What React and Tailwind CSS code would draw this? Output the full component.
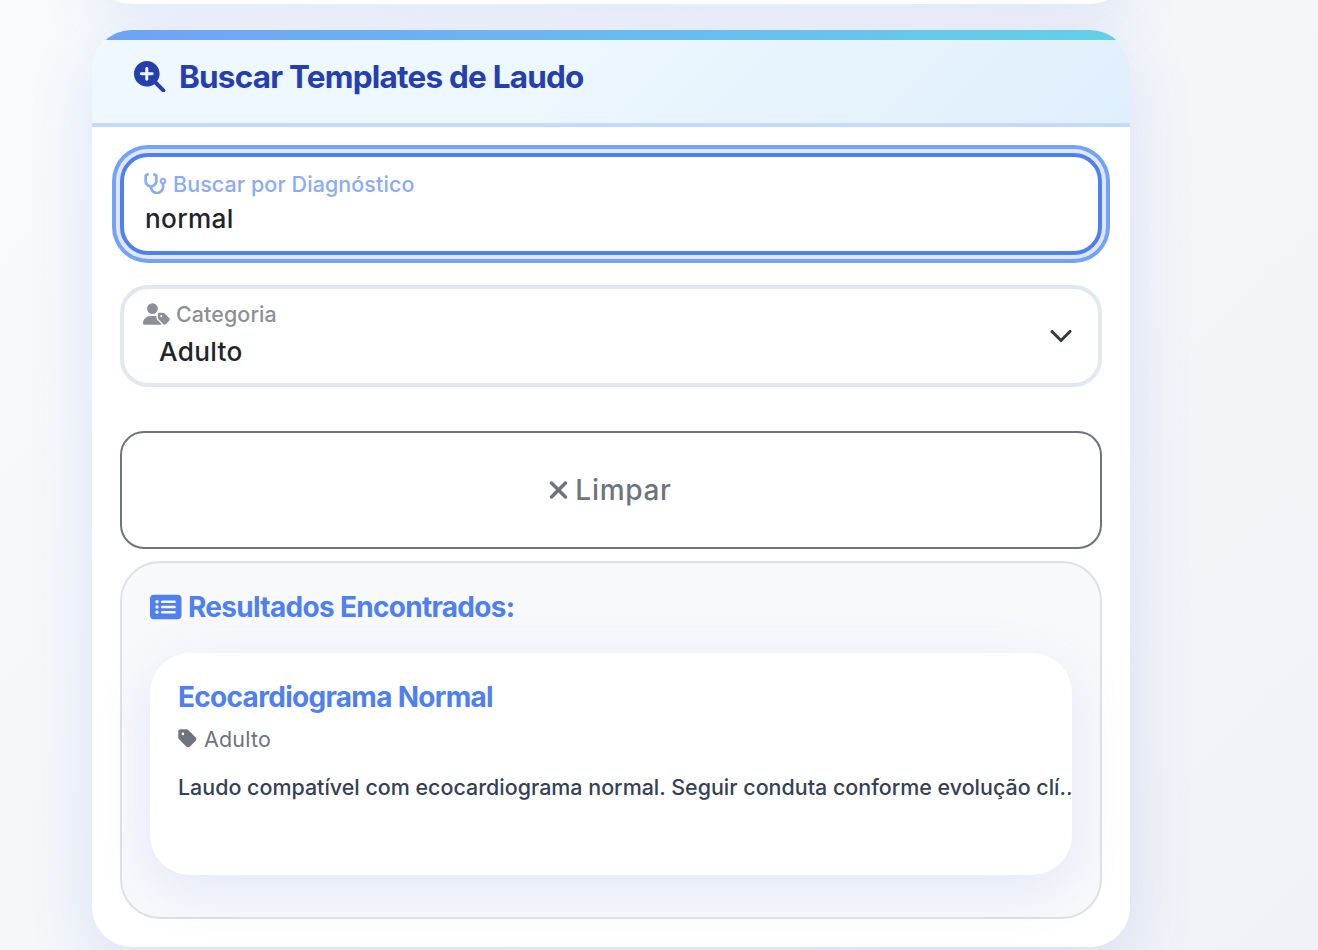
import React from "react";
import {
  FaMagnifyingGlassPlus,
  FaStethoscope,
  FaUserTag,
  FaXmark,
  FaRectangleList,
  FaTag,
} from "react-icons/fa6";

function CardHeader() {
  return (
    <header className="shrink-0">
      <div className="h-[10px] bg-gradient-to-r from-[#6fa2f5] to-[#64d0e9]" />
      <div className="flex h-[87px] items-start gap-[13.5px] border-b-4 border-[#c3dafc] bg-[linear-gradient(135deg,#f0f8ff_0%,#ecf7fe_45%,#e0effc_100%)] pl-[42px] pt-[20px] text-[#253fae]">
        <FaMagnifyingGlassPlus className="mt-[0.5px] h-[31.5px] w-[31.5px]" />
        <h2 className="text-[31.5px] font-bold leading-[34px] tracking-[-0.79px]">
          Buscar Templates de Laudo
        </h2>
      </div>
    </header>
  );
}

function DiagnosisField() {
  return (
    <label className="mt-[26px] block h-[102px] rounded-[28px] border-4 border-[#4f80f0] bg-white pl-[19px] pt-[14px] shadow-[0_0_0_4px_#e0e7fa,0_0_0_8px_#72a3f6]">
      <span className="flex h-[26px] items-center gap-[6px] text-[21.45px] font-medium tracking-[0.1px] text-[#8aabf6]">
        <FaStethoscope className="-mt-px h-[21.5px] w-[24px]" />
        Buscar por Diagnóstico
      </span>
      <span className="block pl-[2px] pt-[5px] text-[26.2px] font-medium leading-[34px] tracking-[0.3px] text-[#212529]">normal</span>
    </label>
  );
}

function CategoryField() {
  return (
    <label className="mt-[30px] flex h-[102px] items-start justify-between rounded-[28px] border-4 border-[#e2e8f0] bg-white pl-[19px] pt-[12px]">
      <span className="block">
        <span className="flex h-[26px] items-center gap-[6px] text-[21.45px] font-medium tracking-[0.1px] text-[#8b9096]">
          <FaUserTag className="h-[22px] w-[27px]" />
          Categoria
        </span>
        <span className="block pl-[16px] pt-[8px] text-[26.2px] font-medium leading-[34px] tracking-[0.3px] text-[#212529]">Adulto</span>
      </span>
      <svg viewBox="0 0 16 16" className="mr-[25px] mt-[23px] size-[24px]" fill="none" stroke="#343a40" strokeWidth="2.1" strokeLinecap="round" strokeLinejoin="round">
        <path d="m2 5 6 6 6-6" />
      </svg>
    </label>
  );
}

function Results() {
  return (
    <section className="mt-[12px] h-[358px] rounded-[40px] border-2 border-[#dee2e6] bg-[#f8f9fb] px-[28px] pt-[27px]">
      <h3 className="flex h-[34px] items-center gap-[6.5px] text-[28px] font-bold tracking-[-0.7px] text-[#4f80f0]">
        <FaRectangleList className="-mt-px h-[28px] w-[31.5px]" />
        Resultados Encontrados:
      </h3>
      <article className="mt-[29px] h-[222px] overflow-hidden rounded-[40px] bg-white pl-[28px] pt-[27px] shadow-[0_14px_56px_rgba(70,110,230,0.12)]">
        <h4 className="text-[28px] font-bold leading-[34px] tracking-[-0.7px] text-[#4f80f0]">Ecocardiograma Normal</h4>
        <p className="mt-[12px] flex h-[26px] items-center gap-[7px] text-[21.45px] tracking-[0.2px] text-[#6c757d]">
          <FaTag className="-mt-px h-[21px] w-[19px]" />
          Adulto
        </p>
        <p className="mt-[21px] whitespace-nowrap text-[21.45px] font-medium leading-[28px] text-[#334155]">
          Laudo compatível com ecocardiograma normal. Seguir conduta conforme evolução clí...
        </p>
      </article>
    </section>
  );
}

export default function App() {
  return (
    <main className="flex h-[950px] w-[1318px] flex-col overflow-hidden bg-[linear-gradient(135deg,#f8fafc_0%,#f4f6f9_50%,#f0f2f7_100%)] pl-[92px] font-['Inter',sans-serif]">
      <div className="-mt-[396px] h-[400px] w-[1038px] shrink-0 rounded-[40px] bg-white shadow-[0_20px_60px_rgba(70,110,230,0.1)]" />
      <div className="mt-[26px] flex h-[917px] w-[1038px] shrink-0 flex-col overflow-hidden rounded-[40px] bg-white shadow-[0_20px_64px_rgba(70,110,230,0.15)]">
        <CardHeader />
        <div className="px-[28px]">
          <DiagnosisField />
          <CategoryField />
          <button className="mt-[44px] flex h-[118px] w-full items-center justify-center gap-[6px] rounded-[24px] border-2 border-[#6c757d] pr-[2px] text-[28px] font-medium tracking-[0.7px] text-[#6c757d]">
            <FaXmark className="h-[28px] w-[21px]" />
            Limpar
          </button>
          <Results />
        </div>
      </div>
    </main>
  );
}
